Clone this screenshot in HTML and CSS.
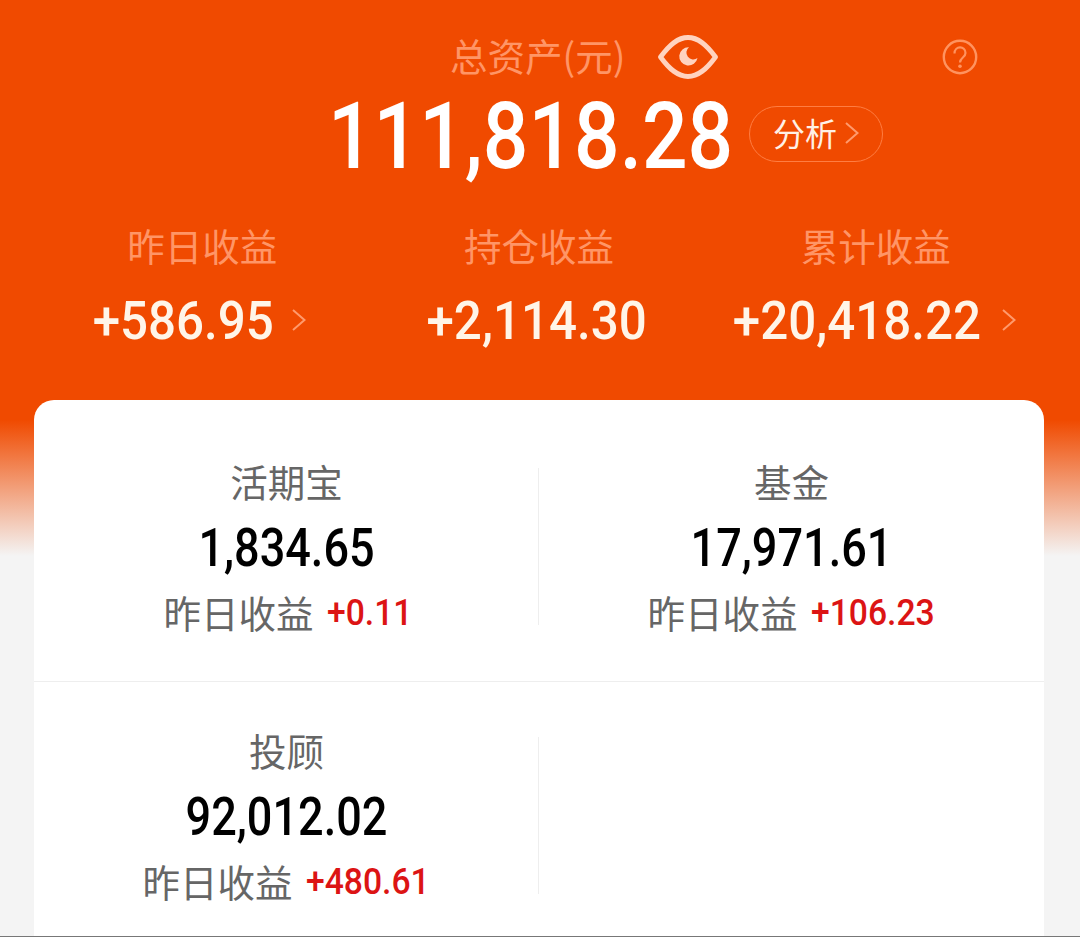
FILE: index.html
```html
<!DOCTYPE html>
<html lang="zh-CN">
<head>
  <meta charset="UTF-8" />
  <meta name="viewport" content="width=device-width, initial-scale=1.0"/>
  <title>总资产</title>
  <link rel="stylesheet" href="styles.css">
</head>
<body>
  <div class="page">

    <!-- Total assets -->
    <div class="header">
      <div class="title-row">
        <span class="title">总资产(元)</span>
        <svg class="eye" viewBox="0 0 60 44">
          <path d="M2.500 22C12 9 20 2.500 30 2.500S48 9 57.500 22C48 35 40 41.500 30 41.500S12 35 2.500 22Z" fill="none" stroke="#ffd3bf" stroke-width="4.800" stroke-linejoin="round"/>
          <path d="M31 12.200A9.200 9.200 0 1 0 39.500 23A6.500 6.500 0 0 1 31 12.200Z" fill="#ffd3bf"/>
        </svg>
        <svg class="help" viewBox="0 0 36 36">
          <circle cx="18" cy="18" r="16.200" fill="none" stroke="#ff935f" stroke-width="2.400"/>
          <path d="M12.500 14.500C12.500 6.500 23.500 6.500 23.500 14C23.500 18.500 18 18.500 18 23.500" fill="none" stroke="#ff935f" stroke-width="2.200"/>
          <circle cx="18" cy="27.300" r="1.800" fill="#ff935f"/>
        </svg>
      </div>
      <div class="total-row">
        <span class="total num">111,818.28</span>
        <a class="analysis"><span>分析</span><svg class="arrow" viewBox="0 0 14 22"><path d="M1 1L12.500 11L1 21"/></svg></a>
      </div>
    </div>

    <!-- Earnings -->
    <div class="stats">
      <div class="stat">
        <div class="label">昨日收益</div>
        <div class="value"><span class="num">+586.95</span><svg class="arrow" viewBox="0 0 14 22"><path d="M1 1L12.500 11L1 21"/></svg></div>
      </div>
      <div class="stat">
        <div class="label">持仓收益</div>
        <div class="value"><span class="num">+2,114.30</span></div>
      </div>
      <div class="stat">
        <div class="label">累计收益</div>
        <div class="value"><span class="num">+20,418.22</span><svg class="arrow" viewBox="0 0 14 22"><path d="M1 1L12.500 11L1 21"/></svg></div>
      </div>
    </div>

    <!-- Accounts -->
    <div class="card">
      <div class="row">
        <div class="cell">
          <div class="name">活期宝</div>
          <div class="amount num">1,834.65</div>
          <div class="day">昨日收益<span class="gain num">+0.11</span></div>
        </div>
        <div class="cell">
          <div class="name">基金</div>
          <div class="amount num">17,971.61</div>
          <div class="day">昨日收益<span class="gain num">+106.23</span></div>
        </div>
      </div>
      <div class="row">
        <div class="cell">
          <div class="name">投顾</div>
          <div class="amount num">92,012.02</div>
          <div class="day">昨日收益<span class="gain num">+480.61</span></div>
        </div>
        <div class="cell"></div>
      </div>
    </div>

  </div>
</body>
</html>
```
FILE: styles.css
```css
* {
  box-sizing: border-box;
}

body {
  margin: 0;
  font-family: "Noto Sans CJK SC", sans-serif;
  background: #f4f4f4;
}

.page {
  height: 937px;
  overflow: hidden;
  padding: 30px 36px 0 34px;
  background: linear-gradient(#f04a00 0, #f04a00 420px, #f4f4f4 556px);
  border-bottom: 1px solid #777;
}

/* condensed digits */
.num {
  font-family: Roboto, sans-serif;
  font-weight: 500;
  white-space: nowrap;
  transform: scaleX(0.85);
}

.header {
  height: 188px;
}

.title-row {
  display: flex;
  align-items: center;
  height: 50px;
  padding-left: 416px;
}

.title {
  width: 208px;
  font-size: 37.5px;
  line-height: 50px;
  color: #ff9566;
}

.eye {
  width: 60px;
  height: 44px;
  margin-top: 4px;
}

.help {
  width: 36px;
  height: 36px;
  margin: 3px 0 0 224px;
}

.total-row {
  display: flex;
  align-items: center;
  height: 108px;
  padding-left: 294px;
}

.total {
  width: 421px;
  font-size: 93px;
  line-height: 104px;
  padding-top: 5px;
  color: #fff;
  transform: scaleX(0.863);
  transform-origin: left;
}

.arrow {
  width: 14px;
  height: 22px;
  fill: none;
  stroke: #ff9a6c;
  stroke-width: 2;
}

.analysis {
  display: flex;
  align-items: center;
  justify-content: center;
  gap: 8px;
  flex: none;
  width: 134px;
  height: 56px;
  border: 1.5px solid #ff7d42;
  border-radius: 28px;
  font-size: 32px;
  color: #fff0e6;
}

.analysis span {
  padding-bottom: 4px;
}

.analysis .arrow {
  margin-top: -2px;
}

.stats {
  display: grid;
  grid-template-columns: repeat(3, 1fr);
  height: 182px;
  text-align: center;
}

.label {
  font-size: 37.5px;
  line-height: 54px;
  color: #ff9566;
}

.value {
  display: flex;
  align-items: center;
  justify-content: center;
  gap: 20px;
  height: 96px;
  margin-left: -4px;
  font-size: 54px;
  color: #fff5e8;
}

.value .num {
  margin: 0 -11px;
  transform: scaleX(0.913);
}

.card {
  height: 537px;
  border-radius: 20px 20px 0 0;
  background: #fff;
}

.row {
  display: grid;
  grid-template-columns: 1fr 1fr;
  height: 269px;
  padding-top: 13px;
}

.row:first-child {
  height: 282px;
  padding-top: 26px;
  border-bottom: 1px solid #eee;
}

.cell {
  position: relative;
  padding-top: 28px;
  text-align: center;
}

.cell:first-child::after {
  content: "";
  position: absolute;
  top: 42px;
  right: 0;
  width: 1px;
  height: 157px;
  background: #eee;
}

.name {
  font-size: 37.5px;
  line-height: 54px;
  color: #666;
}

.amount {
  padding-top: 5px;
  font-size: 53px;
  line-height: 71px;
  color: #000;
}

.day {
  display: flex;
  align-items: center;
  justify-content: center;
  gap: 13px;
  font-size: 37.5px;
  line-height: 52px;
  color: #666;
}

.gain {
  margin-right: -0.3em;
  padding-top: 3px;
  font-size: 37px;
  color: #dc1414;
  transform: scaleX(0.91);
  transform-origin: left;
}
```
